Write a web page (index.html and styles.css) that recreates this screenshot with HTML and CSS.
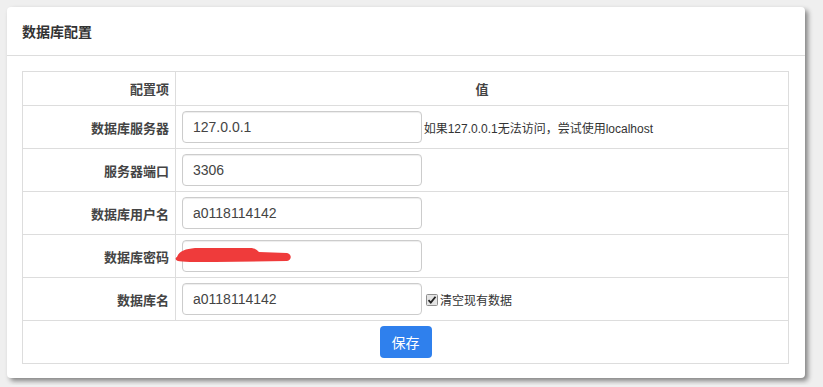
FILE: index.html
```html
<!DOCTYPE html>
<html>
    <head>
        <meta charset="utf-8">
        <title>数据库配置</title>
        <link rel="stylesheet" href="styles.css">
    </head>
    <body>
        <div class="panel">
            <div class="panel-heading">数据库配置</div>
            <div class="panel-body">
                <table class="config-table" cellspacing="0">
                    <tr class="head-row">
                        <th class="label-col">配置项</th>
                        <th class="value-col">值</th>
                    </tr>
                    <tr>
                        <td class="label-col">数据库服务器</td>
                        <td class="value-col">
                            <input type="text" class="field" value="127.0.0.1">
                            <span class="help">如果127.0.0.1无法访问，尝试使用localhost</span>
                        </td>
                    </tr>
                    <tr>
                        <td class="label-col">服务器端口</td>
                        <td class="value-col"><input type="text" class="field" value="3306"></td>
                    </tr>
                    <tr>
                        <td class="label-col">数据库用户名</td>
                        <td class="value-col"><input type="text" class="field" value="a0118114142"></td>
                    </tr>
                    <tr>
                        <td class="label-col">数据库密码</td>
                        <td class="value-col">
                            <div class="masked">
                                <input type="text" class="field" value="">
                                <svg class="scribble" width="118" height="16" viewBox="0 0 118 16">
                                    <path d="M2 10 C4 4 10 2 20 1 L75 1 C80 1 82 3 84 5 L112 6 C117 7 117 13 112 14 L40 15 C20 15 6 15 3 14 C0 13 0 11 2 10 Z" fill="#ef3b3b"/>
                                </svg>
                            </div>
                        </td>
                    </tr>
                    <tr>
                        <td class="label-col">数据库名</td>
                        <td class="value-col">
                            <input type="text" class="field" value="a0118114142">
                            <label class="check">
                                <svg class="check-box" width="12" height="12" viewBox="0 0 12 12">
                                    <rect x="0.5" y="0.5" width="11" height="11" rx="1" fill="#e4e4e4" stroke="#8f8f8f"/>
                                    <path d="M2.5 6.2 L4.8 8.6 L9.5 2.8" fill="none" stroke="#222222" stroke-width="1.8"/>
                                </svg>
                                清空现有数据
                            </label>
                        </td>
                    </tr>
                    <tr>
                        <td class="submit-cell" colspan="2"><button type="submit" class="btn-save">保存</button></td>
                    </tr>
                </table>
            </div>
        </div>
    </body>
</html>
```

FILE: styles.css
```css
body{
    margin: 0;
    padding: 7px;
    background: #efefef;
    font-family: "Liberation Sans", Arial, "Noto Sans CJK SC", sans-serif;
    color: #333333;
}

.panel{
    width: 798px;
    height: 371px;
    box-sizing: border-box;
    background: #ffffff;
    border-radius: 4px;
    box-shadow: 3px 3px 5px rgba(0, 0, 0, 0.45);
}

.panel-heading{
    height: 49px;
    box-sizing: border-box;
    padding: 0 15px;
    display: flex;
    align-items: center;
    border-bottom: 1px solid #dddddd;
    font-size: 14px;
    font-weight: bold;
    color: #333333;
}

.panel-body{
    padding: 15px;
}

.config-table{
    width: 767px;
    border-collapse: collapse;
    font-size: 13px;
}

.config-table th, .config-table td{
    border: 1px solid #dddddd;
    padding: 0 6px;
    height: 43px;
    box-sizing: border-box;
}

.head-row th{
    height: 34px;
    font-weight: bold;
    color: #444444;
}

.label-col{
    width: 153px;
    text-align: right;
    font-weight: bold;
    color: #444444;
}

th.value-col{
    text-align: center;
}

td.value-col{
    text-align: left;
    white-space: nowrap;
}

.field{
    width: 240px;
    height: 32px;
    box-sizing: border-box;
    padding: 0 10px;
    border: 1px solid #cccccc;
    border-radius: 4px;
    font-family: "Liberation Sans", Arial, sans-serif;
    font-size: 14px;
    color: #444444;
    vertical-align: middle;
    box-shadow: inset 0 1px 1px rgba(0, 0, 0, 0.075);
    outline: none;
}

.help{
    font-size: 12px;
    color: #333333;
    vertical-align: middle;
    margin-left: -2px;
}

.masked{
    position: relative;
    display: inline-block;
    vertical-align: middle;
}

.scribble{
    position: absolute;
    left: -7px;
    top: 7px;
}

.check{
    font-size: 12px;
    color: #333333;
    vertical-align: middle;
}

.check-box{
    vertical-align: -1px;
    margin-right: -1px;
}

.submit-cell{
    text-align: center;
}

.btn-save{
    width: 52px;
    height: 32px;
    border: none;
    border-radius: 4px;
    background: #2f80ed;
    color: #ffffff;
    font-family: "Noto Sans CJK SC", sans-serif;
    font-size: 14px;
    cursor: pointer;
}
```
